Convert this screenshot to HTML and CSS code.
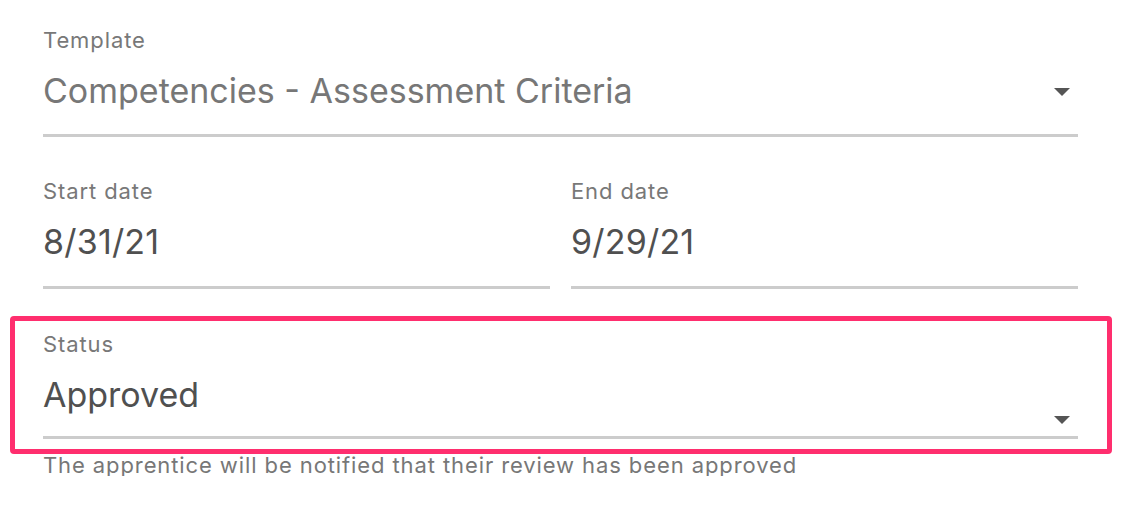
FILE: index.html
```html
<!DOCTYPE html>
<html lang="en">
<head>
<meta charset="utf-8">
<title>Review settings</title>
<link rel="stylesheet" href="styles.css">
</head>
<body>
<main class="form">
  <div class="field">
    <div class="label">Template</div>
    <div class="value value-muted">Competencies - Assessment Criteria</div>
    <svg class="caret caret-mid" width="16" height="8" viewBox="0 0 16 8"><path d="M0 0H16L8 8Z"/></svg>
  </div>

  <div class="row">
    <div class="field">
      <div class="label">Start date</div>
      <div class="value value-date">8/31/21</div>
    </div>
    <div class="field">
      <div class="label">End date</div>
      <div class="value value-date">9/29/21</div>
    </div>
  </div>

  <div class="highlight">
    <div class="field field-status">
      <div class="label">Status</div>
      <div class="value">Approved</div>
      <svg class="caret caret-low" width="16" height="8" viewBox="0 0 16 8"><path d="M0 0H16L8 8Z"/></svg>
    </div>
  </div>
  <p class="helper">The apprentice will be notified that their review has been approved</p>
</main>
</body>
</html>
```

FILE: styles.css
```css
html, body {
  margin: 0;
  padding: 0;
  background: #ffffff;
}

body {
  font-family: Inter, "Noto Sans", "Liberation Sans", sans-serif;
  color: #4f4f4f;
}

.form {
  width: 1035px;
  padding: 25px 0 0 43px;
}

.field {
  position: relative;
  display: flex;
  flex-direction: column;
  border-bottom: 3px solid #cccccc;
  padding-bottom: 21px;
}

.label {
  height: 30px;
  line-height: 30px;
  font-size: 22px;
  letter-spacing: 0.9px;
  color: #787878;
}

.value {
  margin-top: 14px;
  height: 44px;
  line-height: 44px;
  font-size: 34px;
  color: #505050;
  white-space: nowrap;
}

.value-muted {
  color: #777777;
}

.value-date {
  letter-spacing: 0.2px;
}

.row {
  display: flex;
  gap: 21px;
  margin-top: 39px;
}

.row .field {
  flex: 1;
  padding-bottom: 22px;
}

.caret {
  position: absolute;
  right: 8px;
  fill: #555555;
}

.caret-mid {
  top: 63px;
}

.caret-low {
  top: 87px;
}

.highlight {
  margin: 27px -34px 0 -33px;
  padding: 8px 29px 10px 28px;
  border: 5px solid #ff2e6e;
  border-radius: 4px;
}

.field-status {
  padding-bottom: 19px;
}

.helper {
  margin: 0;
  height: 22px;
  line-height: 22px;
  font-size: 22px;
  letter-spacing: 0.9px;
  color: #777777;
}
```
